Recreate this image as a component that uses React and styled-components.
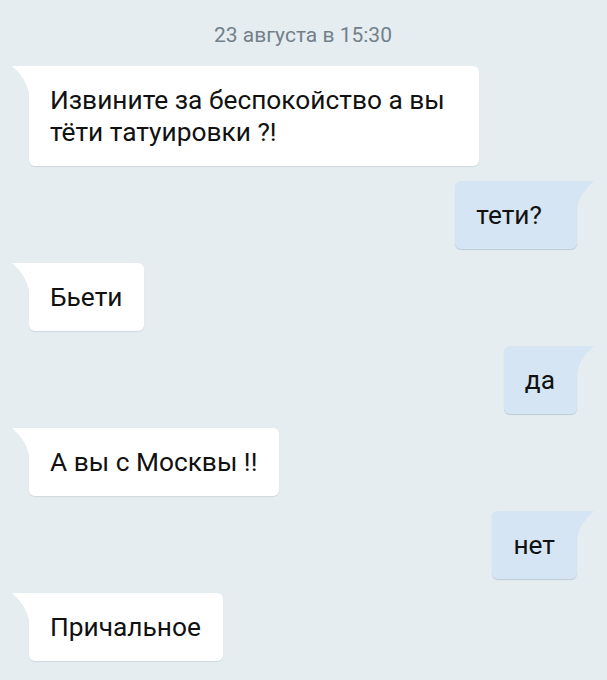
import React from "react";
import styled, { createGlobalStyle } from "styled-components";

const GlobalStyle = createGlobalStyle`
  html, body {
    margin: 0;
    padding: 0;
    background: #e6edf0;
  }
  body {
    font-family: Roboto, "Noto Sans", sans-serif;
  }
`;

const Chat = styled.div`
  display: flex;
  flex-direction: column;
  gap: 14.5px;
  width: 607px;
  min-height: 680px;
  box-sizing: border-box;
  padding: 23px 30px 0 29px;
  background: #e6edf0;
`;

const DateLine = styled.div`
  text-align: center;
  font-size: 21px;
  line-height: 24px;
  color: #72808a;
  margin-bottom: 4.5px;
`;

const Row = styled.div`
  display: flex;
  justify-content: ${(p) => (p.$out ? "flex-end" : "flex-start")};
`;

const Bubble = styled.div`
  position: relative;
  box-sizing: border-box;
  max-width: 450px;
  padding: 18px 22px 18px 21px;
  font-size: 26.3px;
  line-height: 32px;
  color: #111;
  background: ${(p) => (p.$out ? "#d5e5f3" : "#ffffff")};
  border-radius: ${(p) => (p.$out ? "6px 0 6px 6px" : "0 6px 6px 6px")};
  box-shadow: 0 1px 1px ${(p) => (p.$out ? "#bccbd7" : "#cfd8de")};
`;

const Tail = styled.svg`
  position: absolute;
  top: 0;
  ${(p) => (p.$out ? "right: -17px;" : "left: -17px;")}
  width: 18px;
  height: 27px;
`;

const Message = ({ out, children }) => (
  <Row $out={out}>
    <Bubble $out={out}>
      <Tail $out={out} viewBox="0 0 18 27">
        {out ? (
          <path d="M0 0 L18 0 Q4 12 1 27 L0 27 Z" fill="#d5e5f3" />
        ) : (
          <path d="M18 0 L0 0 Q14 12 17 27 L18 27 Z" fill="#ffffff" />
        )}
      </Tail>
      {children}
    </Bubble>
  </Row>
);

export default function App() {
  return (
    <>
      <GlobalStyle />
      <Chat>
        <DateLine>23 августа в 15:30</DateLine>
        <Message>Извините за беспокойство а вы тёти татуировки ?!</Message>
        <Message out>тети?&nbsp;&nbsp;</Message>
        <Message>Бьети</Message>
        <Message out>да</Message>
        <Message>А вы с Москвы !!</Message>
        <Message out>нет</Message>
        <Message>Причальное</Message>
      </Chat>
    </>
  );
}
